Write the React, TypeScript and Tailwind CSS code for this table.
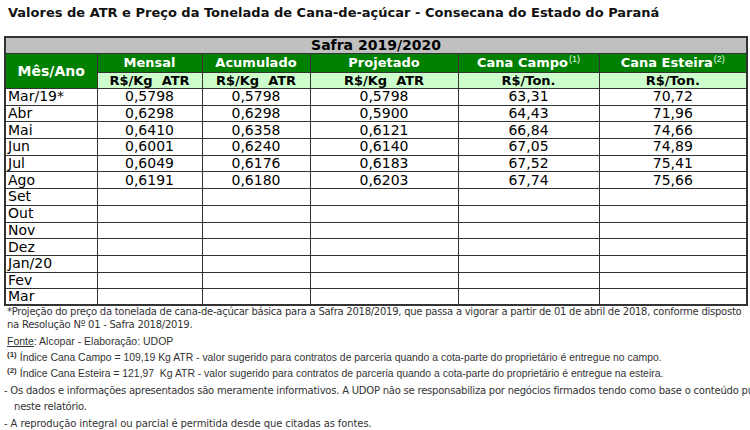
import React from "react";

const rows: [string, string, string, string, string, string][] = [
  ["Mar/19*", "0,5798", "0,5798", "0,5798", "63,31", "70,72"],
  ["Abr", "0,6298", "0,6298", "0,5900", "64,43", "71,96"],
  ["Mai", "0,6410", "0,6358", "0,6121", "66,84", "74,66"],
  ["Jun", "0,6001", "0,6240", "0,6140", "67,05", "74,89"],
  ["Jul", "0,6049", "0,6176", "0,6183", "67,52", "75,41"],
  ["Ago", "0,6191", "0,6180", "0,6203", "67,74", "75,66"],
  ["Set", "", "", "", "", ""],
  ["Out", "", "", "", "", ""],
  ["Nov", "", "", "", "", ""],
  ["Dez", "", "", "", "", ""],
  ["Jan/20", "", "", "", "", ""],
  ["Fev", "", "", "", "", ""],
  ["Mar", "", "", "", "", ""],
];

const verdana = { fontFamily: '"DejaVu Sans", Verdana, sans-serif' };
const arial = { fontFamily: '"Liberation Sans", Arial, sans-serif' };

export default function App() {
  return (
    <div className="w-[750px] h-[430px] overflow-hidden bg-white text-black" style={verdana}>
      <div className="pl-2 pt-[5px] h-[36px] text-[13px] font-bold leading-[16px] text-[#111]">
        Valores de ATR e Preço da Tonelada de Cana-de-açúcar - Consecana do Estado do Paraná
      </div>
      <div className="pl-1">
        <table className="border-collapse border-2 border-[#333] table-fixed w-[742px]">
          <colgroup>
            <col className="w-[92px]" />
            <col className="w-[105px]" />
            <col className="w-[108px]" />
            <col className="w-[148px]" />
            <col className="w-[141px]" />
            <col className="w-[148px]" />
          </colgroup>
          <thead>
            <tr className="h-[16px] bg-[#c0c0c0]">
              <th colSpan={6} className="border border-[#333] p-0 text-[14px] leading-[15px] font-bold text-center">
                Safra 2019/2020
              </th>
            </tr>
            <tr className="h-[19px] bg-[#008000] text-white">
              <th rowSpan={2} className="border border-[#333] p-0 text-[14px] leading-[18px] font-bold text-center">
                Mês/Ano
              </th>
              <th className="border border-[#333] p-0 text-[13px] leading-[18px] font-bold">Mensal</th>
              <th className="border border-[#333] p-0 text-[13px] leading-[18px] font-bold">Acumulado</th>
              <th className="border border-[#333] p-0 text-[13px] leading-[18px] font-bold">Projetado</th>
              <th className="border border-[#333] p-0 text-[13px] leading-[18px] font-bold">
                Cana Campo
                <sup className="text-[9px] leading-[9px] font-normal align-top relative top-[1px] ml-[1px] text-[#e8ffe8]" style={arial}>(1)</sup>
              </th>
              <th className="border border-[#333] p-0 text-[13px] leading-[18px] font-bold">
                Cana Esteira
                <sup className="text-[9px] leading-[9px] font-normal align-top relative top-[1px] ml-[1px] text-[#e8ffe8]" style={arial}>(2)</sup>
              </th>
            </tr>
            <tr className="h-[16px] bg-[#ccffcc]">
              <th className="border border-[#333] p-0 text-[13px] leading-[15px] font-bold whitespace-pre">R$/Kg  ATR</th>
              <th className="border border-[#333] p-0 text-[13px] leading-[15px] font-bold whitespace-pre">R$/Kg  ATR</th>
              <th className="border border-[#333] p-0 text-[13px] leading-[15px] font-bold whitespace-pre">R$/Kg  ATR</th>
              <th className="border border-[#333] p-0 text-[13px] leading-[15px] font-bold">R$/Ton.</th>
              <th className="border border-[#333] p-0 text-[13px] leading-[15px] font-bold">R$/Ton.</th>
            </tr>
          </thead>
          <tbody>
            {rows.map((r) => (
              <tr key={r[0]} className="h-[16.7px]">
                <td className="border border-[#333] py-0 pl-[2px] text-[14px] leading-[15px] text-left">{r[0]}</td>
                {r.slice(1).map((v, i) => (
                  <td key={i} className="border border-[#333] p-0 text-[14px] leading-[15px] text-center">
                    {v}
                  </td>
                ))}
              </tr>
            ))}
          </tbody>
        </table>
      </div>
      <div className="pl-[7px] pr-[2px] text-[10px] tracking-[-0.25px] leading-[13px] text-[#333] -mt-[1px]">
        *Projeção do preço da tonelada de cana-de-açúcar básica para a Safra 2018/2019, que passa a vigorar a partir de 01 de abril de 2018, conforme disposto na Resolução Nº 01 - Safra 2018/2019.
      </div>
      <div className="pl-[7px] mt-[4px] text-[10.5px] leading-[13px] text-[#333]" style={arial}>
        <span className="underline">Fonte</span>: Alcopar - Elaboração: UDOP
      </div>
      <div className="pl-[7px] mt-[3px] text-[10.4px] leading-[13px] text-[#333] whitespace-nowrap" style={arial}>
        <sup className="font-bold text-[8px] mr-[3px]">(1)</sup>Índice Cana Campo = 109,19 Kg ATR - valor sugerido para contratos de parceria quando a cota-parte do proprietário é entregue no campo.
      </div>
      <div className="pl-[7px] mt-[3px] text-[10.4px] leading-[13px] text-[#333] whitespace-nowrap" style={arial}>
        <sup className="font-bold text-[8px] mr-[3px]">(2)</sup>Índice Cana Esteira = 121,97&nbsp; Kg ATR - valor sugerido para contratos de parceria quando a cota-parte do proprietário é entregue na esteira.
      </div>
      <div className="pl-[4px] mt-[3px] text-[10px] tracking-[-0.22px] leading-[16px] text-[#333] whitespace-nowrap">
        - Os dados e informações apresentados são meramente informativos. A UDOP não se responsabiliza por negócios firmados tendo como base o conteúdo publ
      </div>
      <div className="pl-[14px] text-[10px] tracking-[-0.2px] leading-[16px] text-[#333]">neste relatório.</div>
      <div className="pl-[4px] mt-[1px] text-[10px] tracking-[-0.1px] leading-[16px] text-[#333]">
        - A reprodução integral ou parcial é permitida desde que citadas as fontes.
      </div>
    </div>
  );
}
